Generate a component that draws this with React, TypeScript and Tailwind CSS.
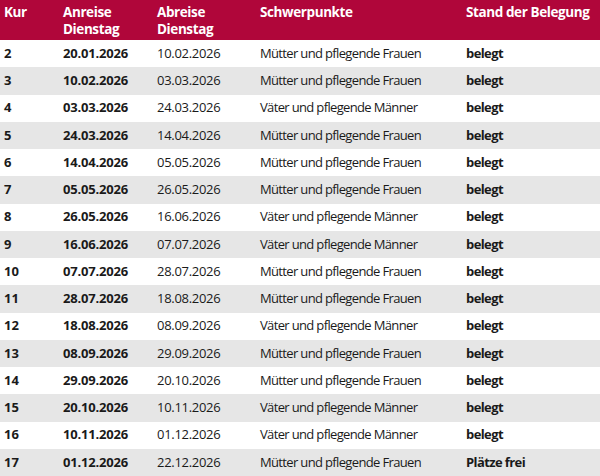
import React from "react";

const rows: [string, string, string, string, string][] = [
  ["2", "20.01.2026", "10.02.2026", "Mütter und pflegende Frauen", "belegt"],
  ["3", "10.02.2026", "03.03.2026", "Mütter und pflegende Frauen", "belegt"],
  ["4", "03.03.2026", "24.03.2026", "Väter und pflegende Männer", "belegt"],
  ["5", "24.03.2026", "14.04.2026", "Mütter und pflegende Frauen", "belegt"],
  ["6", "14.04.2026", "05.05.2026", "Mütter und pflegende Frauen", "belegt"],
  ["7", "05.05.2026", "26.05.2026", "Mütter und pflegende Frauen", "belegt"],
  ["8", "26.05.2026", "16.06.2026", "Väter und pflegende Männer", "belegt"],
  ["9", "16.06.2026", "07.07.2026", "Väter und pflegende Männer", "belegt"],
  ["10", "07.07.2026", "28.07.2026", "Mütter und pflegende Frauen", "belegt"],
  ["11", "28.07.2026", "18.08.2026", "Mütter und pflegende Frauen", "belegt"],
  ["12", "18.08.2026", "08.09.2026", "Väter und pflegende Männer", "belegt"],
  ["13", "08.09.2026", "29.09.2026", "Mütter und pflegende Frauen", "belegt"],
  ["14", "29.09.2026", "20.10.2026", "Mütter und pflegende Frauen", "belegt"],
  ["15", "20.10.2026", "10.11.2026", "Väter und pflegende Männer", "belegt"],
  ["16", "10.11.2026", "01.12.2026", "Väter und pflegende Männer", "belegt"],
  ["17", "01.12.2026", "22.12.2026", "Mütter und pflegende Frauen", "Plätze frei"],
];

const cols = "grid grid-cols-[59px_94px_103px_206px_1fr] pl-[4px]";

export default function App() {
  return (
    <div
      className="w-[600px] h-[476px] bg-white text-[13px] text-[#1a1a1a] overflow-hidden"
      style={{ fontFamily: '"Open Sans", sans-serif' }}
    >
      <div className={`${cols} h-[40px] bg-[#b0063a] text-white font-bold leading-[17px] pt-[4px] text-[13.5px] tracking-[-0.4px]`}>
        <div>Kur</div>
        <div>
          Anreise
          <br />
          Dienstag
        </div>
        <div>
          Abreise
          <br />
          Dienstag
        </div>
        <div>Schwerpunkte</div>
        <div>Stand der Belegung</div>
      </div>
      {rows.map((r, i) => (
        <div
          key={r[0]}
          className={`${cols} h-[27.25px] items-center ${i % 2 === 1 ? "bg-[#e6e6e6]" : "bg-white"}`}
        >
          <div className="font-bold">{r[0]}</div>
          <div className="font-bold tracking-[-0.2px]">{r[1]}</div>
          <div className="tracking-[-0.3px]">{r[2]}</div>
          <div className="tracking-[-0.65px]">{r[3]}</div>
          <div className="font-bold tracking-[-0.6px]">{r[4]}</div>
        </div>
      ))}
    </div>
  );
}
